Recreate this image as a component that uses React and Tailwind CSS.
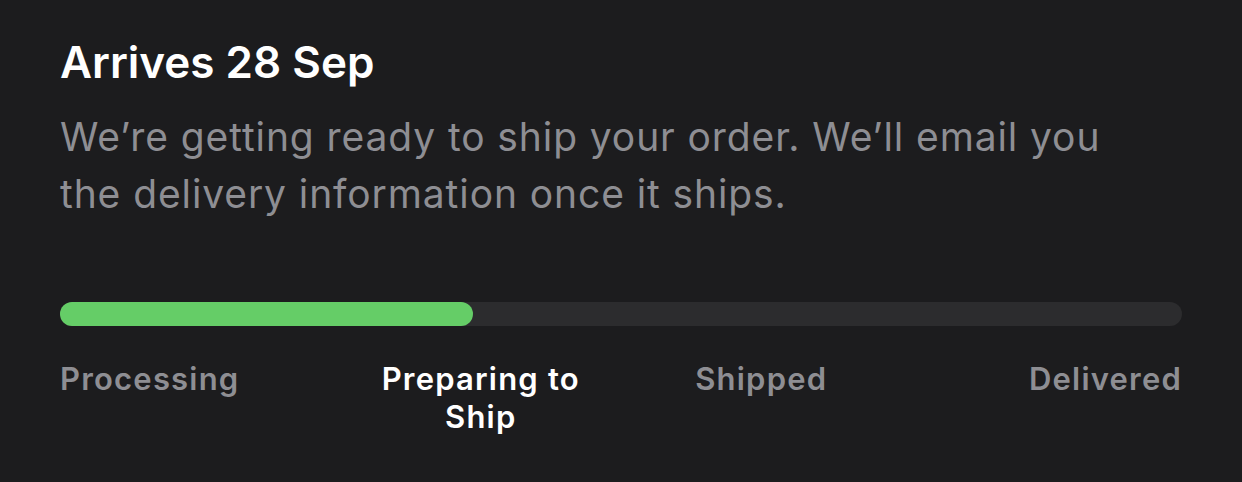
import React from "react";

const steps = ["Processing", "Preparing to Ship", "Shipped", "Delivered"];
const current = 1;

const StepLabel = ({ label, index }) => {
    const align =
        index === 0 ? "text-left" : index === steps.length - 1 ? "text-right" : "text-center px-4";
    const color = index === current ? "text-white" : "text-[#8e8e93]";
    return <div className={`${align} ${color}`}>{label}</div>;
};

const App = () => {
    return (
        <div
            className="w-[1242px] h-[482px] bg-[#1c1c1e] px-[60px] pt-[36px]"
            style={{ fontFamily: "Inter, 'Noto Sans', sans-serif" }}
        >
            <h1 className="text-[44px] leading-[52px] font-semibold text-white">
                Arrives 28 Sep
            </h1>
            <p className="mt-[20px] w-[1090px] text-[39px] leading-[57px] tracking-[0.9px] text-[#8e8e93]">
                We’re getting ready to ship your order. We’ll email you the delivery information
                once it ships.
            </p>

            <div className="mt-[80px] h-[24px] w-full rounded-full bg-[#2c2c2e]">
                <div className="h-full w-[413px] rounded-full bg-[#65cd67]" />
            </div>

            <div className="mt-[34px] grid grid-cols-4 text-[31px] leading-[38px] tracking-[1.2px] font-semibold">
                {steps.map((s, i) => (
                    <StepLabel key={s} label={s} index={i} />
                ))}
            </div>
        </div>
    );
};

export default App;
